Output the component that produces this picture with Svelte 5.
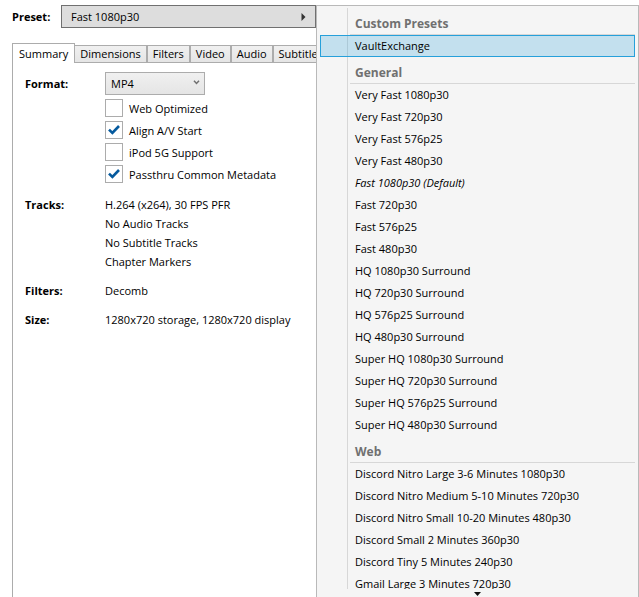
<script>
  const tabs = ['Summary', 'Dimensions', 'Filters', 'Video', 'Audio', 'Subtitles'];
  let activeTab = $state('Summary');
  let format = $state('MP4');

  let options = $state([
    { label: 'Web Optimized', on: false },
    { label: 'Align A/V Start', on: true },
    { label: 'iPod 5G Support', on: false },
    { label: 'Passthru Common Metadata', on: true }
  ]);

  const details = [
    {
      label: 'Tracks:',
      lines: ['H.264 (x264), 30 FPS PFR', 'No Audio Tracks', 'No Subtitle Tracks', 'Chapter Markers']
    },
    { label: 'Filters:', lines: ['Decomb'] },
    { label: 'Size:', lines: ['1280x720 storage, 1280x720 display'] }
  ];

  const highlighted = 'VaultExchange';
  const defaultPreset = 'Fast 1080p30 (Default)';

  const groups = [
    { name: 'Custom Presets', items: ['VaultExchange'] },
    {
      name: 'General',
      items: [
        'Very Fast 1080p30',
        'Very Fast 720p30',
        'Very Fast 576p25',
        'Very Fast 480p30',
        'Fast 1080p30 (Default)',
        'Fast 720p30',
        'Fast 576p25',
        'Fast 480p30',
        'HQ 1080p30 Surround',
        'HQ 720p30 Surround',
        'HQ 576p25 Surround',
        'HQ 480p30 Surround',
        'Super HQ 1080p30 Surround',
        'Super HQ 720p30 Surround',
        'Super HQ 576p25 Surround',
        'Super HQ 480p30 Surround'
      ]
    },
    {
      name: 'Web',
      items: [
        'Discord Nitro Large 3-6 Minutes 1080p30',
        'Discord Nitro Medium 5-10 Minutes 720p30',
        'Discord Nitro Small 10-20 Minutes 480p30',
        'Discord Small 2 Minutes 360p30',
        'Discord Tiny 5 Minutes 240p30',
        'Gmail Large 3 Minutes 720p30'
      ]
    }
  ];
</script>

<main class="window">
  <div class="preset-row">
    <label class="caption" for="preset">Preset:</label>
    <button id="preset" class="preset" type="button" aria-haspopup="menu" aria-expanded="true">
      <span>Fast 1080p30</span>
      <svg width="5" height="8" viewBox="0 0 5 8" aria-hidden="true"><path d="M0.5 0L4.5 4L0.5 8Z" fill="#333" /></svg>
    </button>
  </div>

  <div class="tabs" role="tablist">
    {#each tabs as tab}
      <button
        type="button"
        role="tab"
        class="tab"
        class:active={tab === activeTab}
        aria-selected={tab === activeTab}
        onclick={() => (activeTab = tab)}>{tab}</button>
    {/each}
  </div>

  <section class="panel">
    <div class="field">
      <label class="caption" for="format">Format:</label>
      <div class="format">
        <div class="select">
          <select id="format" bind:value={format}>
            <option>MP4</option>
            <option>MKV</option>
            <option>WebM</option>
          </select>
          <svg width="7" height="5" viewBox="0 0 7 5" aria-hidden="true"
            ><path d="M1 0.8L3.5 3.4L6 0.8" fill="none" stroke="#707070" stroke-width="1.5" /></svg>
        </div>
        {#each options as option}
          <label class="check">
            <span class="box">
              <input type="checkbox" bind:checked={option.on} />
              {#if option.on}
                <svg width="12" height="10" viewBox="0 0 12 10" aria-hidden="true"
                  ><path d="M1 4.6L4.4 8L11 1" fill="none" stroke="#055a9e" stroke-width="2.6" /></svg>
              {/if}
            </span>
            {option.label}
          </label>
        {/each}
      </div>
    </div>

    {#each details as row}
      <div class="field">
        <span class="caption">{row.label}</span>
        <div class="lines">
          {#each row.lines as line}<span>{line}</span>{/each}
        </div>
      </div>
    {/each}
  </section>

  <div class="menu" role="menu" aria-label="Presets">
    <div class="menu-body">
      {#each groups as group}
        <h2>{group.name}</h2>
        {#each group.items as item}
          <button
            type="button"
            role="menuitem"
            class="item"
            class:highlighted={item === highlighted}
            class:default={item === defaultPreset}>{item}</button>
        {/each}
      {/each}
    </div>
    <button class="more" type="button" aria-label="Scroll down">
      <svg width="7" height="4" viewBox="0 0 7 4" aria-hidden="true"><path d="M0 0H7L3.5 4Z" fill="#111" /></svg>
    </button>
  </div>
</main>

<style>
  .window {
    position: relative;
    box-sizing: border-box;
    display: flex;
    flex-direction: column;
    height: 100vh;
    padding: 5px 0 0 12px;
    overflow: hidden;
    background: #fff;
    color: #000;
    font: 11px/19px 'Open Sans', 'Noto Sans', sans-serif;
  }

  button,
  select {
    box-sizing: border-box;
    margin: 0;
    font: inherit;
    color: inherit;
    border-radius: 0;
  }

  .caption {
    font-weight: bold;
    white-space: nowrap;
  }

  .preset-row {
    display: flex;
    align-items: center;
  }

  .preset-row .caption {
    width: 49px;
  }

  .preset {
    display: flex;
    align-items: center;
    justify-content: space-between;
    width: 255px;
    height: 23px;
    padding: 0 9px;
    background: #ddd;
    border: 1px solid #707070;
  }

  .tabs {
    display: flex;
    align-items: flex-end;
    margin-top: 15px;
  }

  .tab {
    height: 17px;
    padding: 0 5px;
    line-height: 16px;
    background: linear-gradient(#f0f0f0, #e5e5e5);
    border: 1px solid #acacac;
    border-bottom: 0;
  }

  .tab.active {
    position: relative;
    height: 20px;
    padding: 0 6px;
    margin: 0 -1px -1px 0;
    line-height: 18px;
    background: #fff;
  }

  .panel {
    display: flex;
    flex: 1;
    flex-direction: column;
    gap: 10px;
    padding: 9px 12px;
    border: 1px solid #acacac;
    border-bottom: 0;
  }

  .field {
    display: flex;
    align-items: flex-start;
  }

  .field .caption {
    width: 80px;
  }

  .field label.caption {
    line-height: 23px;
  }

  .format,
  .lines {
    display: flex;
    flex-direction: column;
    align-items: flex-start;
  }

  .select {
    display: grid;
    align-items: center;
    margin-bottom: 2px;
  }

  .select > :global(*) {
    grid-area: 1 / 1;
  }

  .select select {
    width: 100px;
    height: 23px;
    padding: 0 5px;
    appearance: none;
    background: linear-gradient(#f0f0f0, #e5e5e5);
    border: 1px solid #acacac;
  }

  .select svg {
    justify-self: end;
    margin: 0 5px 2px 0;
    pointer-events: none;
  }

  .check {
    display: flex;
    align-items: center;
    gap: 6px;
    height: 22px;
    white-space: nowrap;
  }

  .box {
    display: grid;
    place-items: center;
  }

  .box > * {
    grid-area: 1 / 1;
  }

  .box svg {
    pointer-events: none;
  }

  .box input {
    box-sizing: border-box;
    width: 18px;
    height: 18px;
    margin: 0;
    appearance: none;
    background: #fff;
    border: 1px solid #acacac;
  }

  .menu {
    position: absolute;
    inset: 5px 0 0 316px;
    display: flex;
    flex-direction: column;
    padding: 2px 3px 0;
    background: #f5f5f5;
    border: 1px solid #b9b9b9;
    border-bottom: 0;
  }

  .menu-body {
    display: flex;
    flex: 1;
    flex-direction: column;
    min-height: 0;
    overflow: hidden;
    background: linear-gradient(#d7d7d7, #d7d7d7) 27px 0 / 1px 100% no-repeat;
  }

  h2 {
    flex: none;
    box-sizing: border-box;
    height: 27px;
    margin: 0 0 0 30px;
    padding: 6px 5px 0;
    font-size: 12px;
    font-weight: bold;
    line-height: 20px;
    color: #707070;
    border-bottom: 1px solid #d7d7d7;
  }

  .item {
    flex: none;
    height: 22px;
    padding: 0 0 0 34px;
    line-height: 20px;
    text-align: left;
    white-space: nowrap;
    background: transparent;
    border: 1px solid transparent;
  }

  .item.highlighted {
    background: #26a0da3d;
    border-color: #26a0da;
  }

  .item.default {
    font-style: italic;
  }

  .more {
    display: flex;
    justify-content: center;
    height: 8px;
    padding: 3px 0 0;
    background: transparent;
    border: 0;
  }
</style>
